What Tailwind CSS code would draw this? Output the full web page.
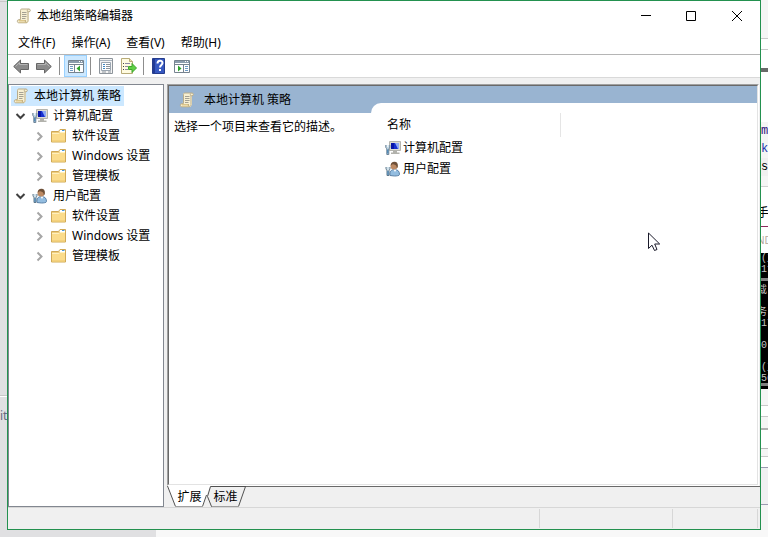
<!DOCTYPE html>
<html lang="zh-CN">
<head>
    <meta charset="UTF-8">
    <meta name="viewport" content="width=device-width, initial-scale=1.0">
    <title>本地组策略编辑器</title>
    <script src="https://cdn.jsdelivr.net/npm/@tailwindcss/browser@4"></script>
</head>
<body class="min-h-screen flex flex-col bg-[#f8f8f8] text-black text-[12px] leading-[20px] font-['Noto_Sans','Noto_Sans_CJK_SC',sans-serif]">

    <!-- Shared icons -->
    <svg class="hidden" aria-hidden="true">
        <symbol id="i-scroll" viewBox="0 0 16 16">
            <path d="M4.500 1h8.500v11.500l-1.500 2.500H3.500z" fill="#f8f0d2"/>
            <path d="M4.500 11.500V2.500c0-1 .5-1.500 1.500-1.500h7c1.800 0 1.800 2.800 0 2.800h-1v8.700c0 1.500-.8 2.300-2 2.300H2.800c-1.900 0-1.900-3-.3-3.100z" fill="#f8f0d2" stroke="#b9ad8c"/>
            <path d="M12 3.800c-1 0-1-2.300.3-2.500" fill="none" stroke="#b9ad8c"/>
            <path d="M2.500 12.500h7M3 14h7.500" stroke="#dcc68a"/>
            <path d="M9.500 12c-.5 1 0 2.300.8 2.500" fill="none" stroke="#b9a677"/>
            <path d="M6 4.500h4.500M6 6.500h4.500M6 8.500h4.500M6 10.500h3.500" stroke="#a5a193"/>
        </symbol>
        <symbol id="i-folder" viewBox="0 0 16 16">
            <path d="M.5 3.500h7l1.500-2h5.500v12.500h-14z" fill="#f0cd7c" stroke="#cfa957"/>
            <path d="M9 2h5v2H8.500z" fill="#fff"/>
            <path d="M11 2.500h2.500" stroke="#4b9ad8"/>
            <path d="M1 5h13v8.500H1z" fill="#fbdc8c"/>
            <path d="M1 5.500h7l1-1h5" stroke="#fff0bd" fill="none"/>
            <path d="M1 13h13" stroke="#ecc76f"/>
        </symbol>
        <symbol id="i-computer" viewBox="0 0 16 16">
            <path d="M4.500 1.500h11v9h-11z" fill="#dcdcd4" stroke="#b4b4ae"/>
            <path d="M6 3h8v6H6z" fill="#1730d0"/>
            <path d="M10 3h4v6h-1z" fill="#8fa9f2"/>
            <path d="M6 3h3v6H6z" fill="#0714a8"/>
            <path d="M8 11h4v1.500h2.500V14H6v-1.500h2z" fill="#b2b2ac"/>
            <path d="M.8 5v2.200c0 1 .7 1.300 1 1.500v5.800h2V8.700c.6-.3 1-.7 1-1.500V5" fill="#c3d9e6" stroke="#6c8296"/>
            <path d="M2.800 4v3" stroke="#fff"/>
            <path d="M2.800 9.500v4" stroke="#2f75ad"/>
        </symbol>
        <symbol id="i-user" viewBox="0 0 16 16">
            <path d="M5 14.500c-.5-4 1-6 4.500-6s5 2 5 5c0 1.200-3 1.500-5 1.500z" fill="#93bde0" stroke="#5d83a8"/>
            <path d="M8.500 8.500l1.500 2.500 1.500-2.500z" fill="#fff"/>
            <circle cx="9" cy="5" r="3.500" fill="#bd8a63"/>
            <path d="M5.800 5C5.500 2 7.500.7 9.500.8c2.500 0 3.800 1.700 3.300 5.200l-1 1.500C12 5 11 4 9 3.500 7.500 3 6.500 3.800 5.800 5z" fill="#6e5038"/>
            <path d="M1 6v1.700c0 .8.500 1.200 1 1.400v5.400h2V9.100c.6-.3 1-.7 1-1.400V6" fill="#cfe0ea" stroke="#61788a"/>
            <path d="M3 10v4" stroke="#2f75ad"/>
        </symbol>
        <symbol id="i-open" viewBox="0 0 16 16">
            <path d="M4.500 6l4 4 4-4" fill="none" stroke="#404040" stroke-width="2"/>
        </symbol>
        <symbol id="i-closed" viewBox="0 0 16 16">
            <path d="M6.500 4.500l4 4-4 4" fill="none" stroke="#a6a6a6" stroke-width="2"/>
        </symbol>
        <symbol id="i-arrow" viewBox="0 0 16 16">
            <path d="M.7 8.500L7.500 2V5.500h8v6h-8V15z" fill="#8b8b8b" stroke="#666"/>
            <path d="M2.500 8.500l4-3.800V6.500h8" fill="none" stroke="#b5b5b5"/>
        </symbol>
    </svg>

    <div class="flex-1 flex">
        <!-- Sliver of the window behind, left -->
        <div class="w-[7px] shrink-0 overflow-hidden bg-[#e0e0e2] flex flex-col">
            <div class="h-[2px] border-b border-[#c8c8c8]"></div>
            <div class="h-[394px] border-b border-[#c8c8c8]"></div>
            <div class="pt-[9px] border-t border-white text-[#666a80]">ite</div>
        </div>

        <main class="relative flex-1 min-w-0 flex flex-col bg-[#f0f0f0] border border-[#23914f]">
            <!-- Title bar -->
            <header class="h-[30px] flex items-center bg-white pl-2">
                <svg class="size-4"><use href="#i-scroll"/></svg>
                <h1 class="flex-1 pl-[5px]">本地组策略编辑器</h1>
                <button class="w-[45px] h-full flex items-center justify-center" aria-label="最小化">
                    <svg class="size-[10px]" viewBox="0 0 10 10"><path d="M0 4.500h10" stroke="#000"/></svg>
                </button>
                <button class="w-[46px] h-full flex items-center justify-center" aria-label="最大化">
                    <svg class="size-[10px]" viewBox="0 0 10 10"><path d="M.5.5h9v9h-9z" fill="none" stroke="#000"/></svg>
                </button>
                <button class="w-[46px] h-full flex items-center justify-center" aria-label="关闭">
                    <svg class="size-[10px]" viewBox="0 0 10 10"><path d="M0 0l10 10M10 0L0 10" stroke="#000"/></svg>
                </button>
            </header>

            <!-- Menu bar -->
            <nav class="h-[23px] flex items-center bg-white pl-[2px]">
                <button class="px-2">文件(F)</button>
                <button class="px-2">操作(A)</button>
                <button class="px-2">查看(V)</button>
                <button class="px-2">帮助(H)</button>
            </nav>

            <!-- Toolbar -->
            <div class="h-[24px] flex items-center bg-white border-t border-t-[#b5b5b5] border-b border-b-[#d9d9d9] pl-px" role="toolbar">
                <button class="w-[23px] flex justify-center" aria-label="后退"><svg class="size-4"><use href="#i-arrow"/></svg></button>
                <button class="w-[23px] flex justify-center" aria-label="前进"><svg class="size-4 -scale-x-100"><use href="#i-arrow"/></svg></button>
                <span class="w-px h-[18px] mx-1 bg-[#8d8d8d]"></span>
                <button class="w-[23px] h-[22px] flex items-center justify-center bg-[#cce8ff] border border-[#99d1ff]" aria-label="显示/隐藏控制台树">
                    <svg class="w-4 h-[14px]" viewBox="0 0 16 14">
                        <path d="M.5 1.500h15v12H.5z" fill="#fff" stroke="#76838f"/>
                        <path d="M1 2h14v2H1z" fill="#8c9dad"/><path d="M11 2.500h1M13 2.500h1" stroke="#fff"/>
                        <path d="M1 5.500h14M6.500 6v7" stroke="#76838f"/>
                        <path d="M2 7.500h3M2 9.500h3M2 11.500h3" stroke="#6d9ac4"/>
                        <path d="M12 6.500v6L8.500 9.500z" fill="#2fa32c"/>
                    </svg>
                </button>
                <span class="w-px h-[18px] mx-[3px] bg-[#8d8d8d]"></span>
                <button class="w-[23px] flex justify-center" aria-label="属性">
                    <svg class="size-4" viewBox="0 0 16 16">
                        <path d="M1.500.5h13v15h-13z" fill="#f4f4f4" stroke="#8d949b"/>
                        <path d="M2 2.500h12" stroke="#a9b3bd"/>
                        <path d="M3.500 4.500h9v8h-9z" fill="#fff" stroke="#9aa5b0"/>
                        <path d="M5 6.500h2M5 8.500h2M5 10.500h2" stroke="#3d87c4"/>
                        <path d="M8 6.500h4M8 8.500h4M8 10.500h4M4 14h4M10 14h3" stroke="#8b939b"/>
                    </svg>
                </button>
                <button class="w-[23px] flex justify-center" aria-label="导出列表">
                    <svg class="size-4" viewBox="0 0 16 16">
                        <path d="M.5.5h8l3 3v12H.5z" fill="#fffbe0" stroke="#b8ab78"/>
                        <path d="M8.500.5v3h3" fill="#eadfae" stroke="#b8ab78"/>
                        <path d="M2 5.500h1M2 8.500h1M2 11.500h1" stroke="#444"/>
                        <path d="M4 5.500h5M4 8.500h3M4 11.500h3" stroke="#8c89a0"/>
                        <path d="M7.500 8.500h3.500V5.500l4.500 4.500-4.500 4.500v-3H7.500z" fill="#5fd045" stroke="#3fa62c"/>
                    </svg>
                </button>
                <span class="w-px h-[18px] mx-[3px] bg-[#8d8d8d]"></span>
                <button class="w-[23px] flex justify-center" aria-label="帮助">
                    <svg class="size-4" viewBox="0 0 16 16">
                        <path d="M1.500.5h12v15h-12z" fill="#3658c0" stroke="#253c8c"/>
                        <path d="M2 1h2v14H2z" fill="#223a94"/>
                        <path d="M6.500 5.500C6.500 2 11.500 2 11.500 5c0 2-2.500 2-2.500 4.500" fill="none" stroke="#fff" stroke-width="2"/>
                        <path d="M8 11h2v2H8z" fill="#fff"/>
                    </svg>
                </button>
                <button class="w-[23px] flex justify-center" aria-label="显示/隐藏操作窗格">
                    <svg class="w-4 h-[14px]" viewBox="0 0 16 14">
                        <path d="M.5 1.500h15v12H.5z" fill="#fff" stroke="#76838f"/>
                        <path d="M1 2h14v2H1z" fill="#8c9dad"/><path d="M11 2.500h1M13 2.500h1" stroke="#fff"/>
                        <path d="M1 5.500h14M9.500 6v7" stroke="#76838f"/>
                        <path d="M11 7.500h3M11 9.500h3M11 11.500h3" stroke="#6d9ac4"/>
                        <path d="M4 6.500v6l3.500-3z" fill="#2fa32c"/>
                    </svg>
                </button>
            </div>

            <div class="flex-1 flex pt-[6px]">
                <!-- Console tree -->
                <aside class="w-[156px] shrink-0 bg-white border border-[#828790] pt-px">
                    <div class="w-fit ml-[2px] pl-[2px] pr-[3px] flex items-center gap-[5px] bg-[#cce8ff]">
                        <svg class="size-4"><use href="#i-scroll"/></svg>本地计算机 策略
                    </div>
                    <ul class="pl-[3px]">
                        <li>
                            <div class="flex items-center">
                                <button class="mr-1" aria-label="折叠"><svg class="size-4"><use href="#i-open"/></svg></button>
                                <svg class="size-4 mr-[5px]"><use href="#i-computer"/></svg>计算机配置
                            </div>
                            <ul class="pl-[19px]">
                                <li class="flex items-center">
                                    <button class="mr-1" aria-label="展开"><svg class="size-4"><use href="#i-closed"/></svg></button>
                                    <svg class="size-4 mr-[5px]"><use href="#i-folder"/></svg>软件设置
                                </li>
                                <li class="flex items-center">
                                    <button class="mr-1" aria-label="展开"><svg class="size-4"><use href="#i-closed"/></svg></button>
                                    <svg class="size-4 mr-[5px]"><use href="#i-folder"/></svg>Windows 设置
                                </li>
                                <li class="flex items-center">
                                    <button class="mr-1" aria-label="展开"><svg class="size-4"><use href="#i-closed"/></svg></button>
                                    <svg class="size-4 mr-[5px]"><use href="#i-folder"/></svg>管理模板
                                </li>
                            </ul>
                        </li>
                        <li>
                            <div class="flex items-center">
                                <button class="mr-1" aria-label="折叠"><svg class="size-4"><use href="#i-open"/></svg></button>
                                <svg class="size-4 mr-[5px]"><use href="#i-user"/></svg>用户配置
                            </div>
                            <ul class="pl-[19px]">
                                <li class="flex items-center">
                                    <button class="mr-1" aria-label="展开"><svg class="size-4"><use href="#i-closed"/></svg></button>
                                    <svg class="size-4 mr-[5px]"><use href="#i-folder"/></svg>软件设置
                                </li>
                                <li class="flex items-center">
                                    <button class="mr-1" aria-label="展开"><svg class="size-4"><use href="#i-closed"/></svg></button>
                                    <svg class="size-4 mr-[5px]"><use href="#i-folder"/></svg>Windows 设置
                                </li>
                                <li class="flex items-center">
                                    <button class="mr-1" aria-label="展开"><svg class="size-4"><use href="#i-closed"/></svg></button>
                                    <svg class="size-4 mr-[5px]"><use href="#i-folder"/></svg>管理模板
                                </li>
                            </ul>
                        </li>
                    </ul>
                </aside>

                <!-- Details pane -->
                <section class="flex-1 min-w-0 ml-[3px] flex flex-col">
                    <div class="flex-1 flex mr-px border border-t-[#a0a0a0] border-l-[#a0a0a0] border-r-white border-b-white">
                        <div class="flex-1 flex bg-[#99b4d1] border border-t-[#696969] border-l-[#696969] border-r-[#e3e3e3] border-b-[#e3e3e3]">
                            <div class="w-[202px] shrink-0 flex flex-col">
                                <h2 class="h-[27px] flex items-center gap-[9px] pl-[10px]">
                                    <svg class="size-4"><use href="#i-scroll"/></svg>本地计算机 策略
                                </h2>
                                <p class="flex-1 bg-white pl-[5px] pt-1">选择一个项目来查看它的描述。</p>
                            </div>
                            <div class="flex-1 mt-[17px] pt-[10px] bg-white rounded-tl-[10px]">
                                <table class="w-[190px]">
                                    <thead>
                                        <tr><th class="h-6 pl-4 text-left font-normal border-r border-[#e5e5e5]">名称</th></tr>
                                    </thead>
                                    <tbody>
                                        <tr><td class="h-[21px] pl-[14px]"><div class="flex items-center gap-[2px]"><svg class="size-4"><use href="#i-computer"/></svg>计算机配置</div></td></tr>
                                        <tr><td class="h-[21px] pl-[14px]"><div class="flex items-center gap-[2px]"><svg class="size-4"><use href="#i-user"/></svg>用户配置</div></td></tr>
                                    </tbody>
                                </table>
                            </div>
                        </div>
                    </div>

                    <!-- View tabs; the slanted outlines sit behind the labels -->
                    <div class="flex h-[21px]" role="tablist">
                        <div class="relative w-[79px] flex">
                            <svg class="absolute inset-0 w-[79px] h-[21px]" viewBox="0 0 79 21">
                                <path d="M0 0h43l-7 20.500H8.500z" fill="#fff"/>
                                <path d="M.5 0l8 20.500M35.500 20.500l4-11.500" fill="none" stroke="#505050"/>
                                <path d="M8 20.500h28M44 20.500h27" stroke="#a0a0a0"/>
                                <path d="M44.500 20.500l-4-10 3-10H79M78.500.5l-7 20" fill="none" stroke="#505050"/>
                            </svg>
                            <button class="relative w-[36px] pl-[9px] whitespace-nowrap" role="tab" aria-selected="true">扩展</button>
                            <button class="relative w-[36px] pl-[9px] whitespace-nowrap" role="tab" aria-selected="false">标准</button>
                        </div>
                        <div class="flex-1 border-t border-[#696969]"></div>
                    </div>
                </section>
            </div>

            <!-- Status bar -->
            <footer class="h-[22px] flex border-t border-[#d7d7d7] py-px pr-[2px]">
                <div class="flex-1 border-r border-[#d7d7d7]"></div>
                <div class="w-[133px] border-r border-[#d7d7d7]"></div>
                <div class="w-[85px] border-r border-[#d7d7d7]"></div>
            </footer>

            <!-- Mouse pointer -->
            <svg class="absolute left-[640px] top-[231px] w-[13px] h-[20px]" viewBox="0 0 13 20">
                <path d="M.5 1v15.500l3.500-3.300 2.500 5.300 2.500-1-2.300-5.500h5z" fill="#fff" stroke="#1a1a2a"/>
            </svg>
        </main>

        <!-- Sliver of the windows behind, right -->
        <div class="w-[7px] shrink-0 overflow-hidden flex flex-col bg-[#f5f5f5] whitespace-nowrap">
            <div class="h-[39px] border-b border-[#c8c8c8]"></div>
            <div class="h-[11px] bg-white border-b border-[#c8c8c8]"></div>
            <div class="h-[22px] bg-white border-b-4 border-[#696969]"></div>
            <div class="h-[50px] bg-white"></div>
            <div class="font-['Liberation_Mono',monospace] leading-[18px]">
                <div class="h-[18px] text-[#30107a]">m</div>
                <div class="h-[18px] text-[#2233aa]">k</div>
                <div class="h-[18px] bg-[#f0f0f0]">s</div>
            </div>
            <div class="h-[11px] border-b border-[#d0d0d0]"></div>
            <div class="h-[40px] bg-white border-b border-[#8c2a5c] pt-[16px]"><span class="-ml-1">手方</span></div>
            <div class="h-[26px] bg-white pt-[3px] text-[10px] text-[#b5a8a0]"><span class="-ml-1">ND</span></div>
            <div class="h-[136px] bg-black text-[#c0c0c0] text-[10px] font-['Liberation_Mono','Noto_Sans_CJK_SC',monospace] leading-[11px]">
                <div class="h-[28px] border-b-3 border-[#808080]">(主<br>1f</div>
                <div class="h-[105px] border-b-3 border-[#808080] pt-[4px]"><span class="-ml-1">载.</span><br><br><span class="-ml-1">务</span><br>17<br><br>0.<br><br>(主<br>56</div>
            </div>
            <div class="h-[17px] border-b border-[#c8c8c8]"></div>
            <div class="h-[11px] bg-white border-b border-[#c8c8c8]"></div>
            <div class="h-[13px] border-b-2 border-[#b0b0b0]"></div>
            <div class="h-[19px] bg-white border-b border-[#b8b8b8]"></div>
            <div class="h-[8px] border-b border-[#c8c8c8]"></div>
            <div class="h-[11px] bg-white border-b border-[#9a9ab0]"></div>
            <div class="h-[37px] bg-[#f0f0f2] border-b border-[#9a9ab0]"></div>
        </div>
    </div>
    <div class="h-[7px] flex"><div class="w-[156px] bg-[#e0e0e2]"></div></div>
</body>
</html>
